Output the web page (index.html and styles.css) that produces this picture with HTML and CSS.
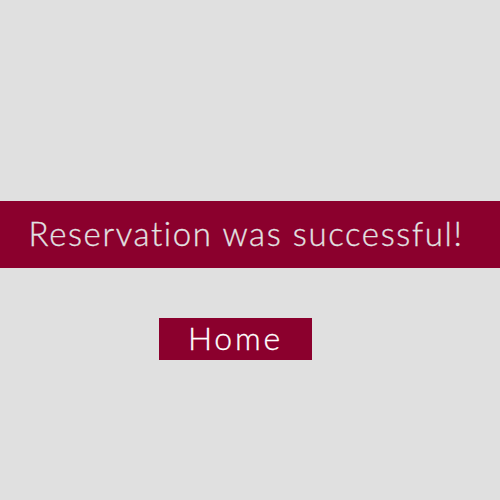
FILE: index.html
```html
<!DOCTYPE html>
<html>
<head>
<meta charset="utf-8">
<link rel="stylesheet" href="styles.css">
</head>
<body>
<main class="page">
  <div class="banner">Reservation was successful!</div>
  <div class="actions">
    <a class="home-btn" href="#">Home</a>
  </div>
</main>
</body>
</html>
```

FILE: styles.css
```css
html, body {
  margin: 0;
  padding: 0;
  background: #e0e0e0;
  height: 100%;
}
.page {
  padding-top: 201px;
  font-family: "Lato", "DejaVu Sans", sans-serif;
  font-variant-ligatures: none;
  font-weight: 300;
}
.banner {
  height: 67px;
  box-sizing: border-box;
  background: #8b002d;
  color: #e3e3e3;
  display: flex;
  align-items: center;
  justify-content: center;
  font-size: 33px;
  letter-spacing: 1.6px;
  padding-right: 8px;
  padding-bottom: 4px;
  -webkit-text-stroke: 0.3px #e3e3e3;
}
.actions {
  padding-top: 50px;
  padding-left: 159px;
}
.home-btn {
  display: flex;
  align-items: center;
  justify-content: center;
  box-sizing: border-box;
  width: 153px;
  height: 42px;
  padding-bottom: 4px;
  background: #8b002d;
  color: #ffffff;
  text-decoration: none;
  font-size: 32px;
  letter-spacing: 2.8px;
  -webkit-text-stroke: 0.3px #ffffff;
}
```
